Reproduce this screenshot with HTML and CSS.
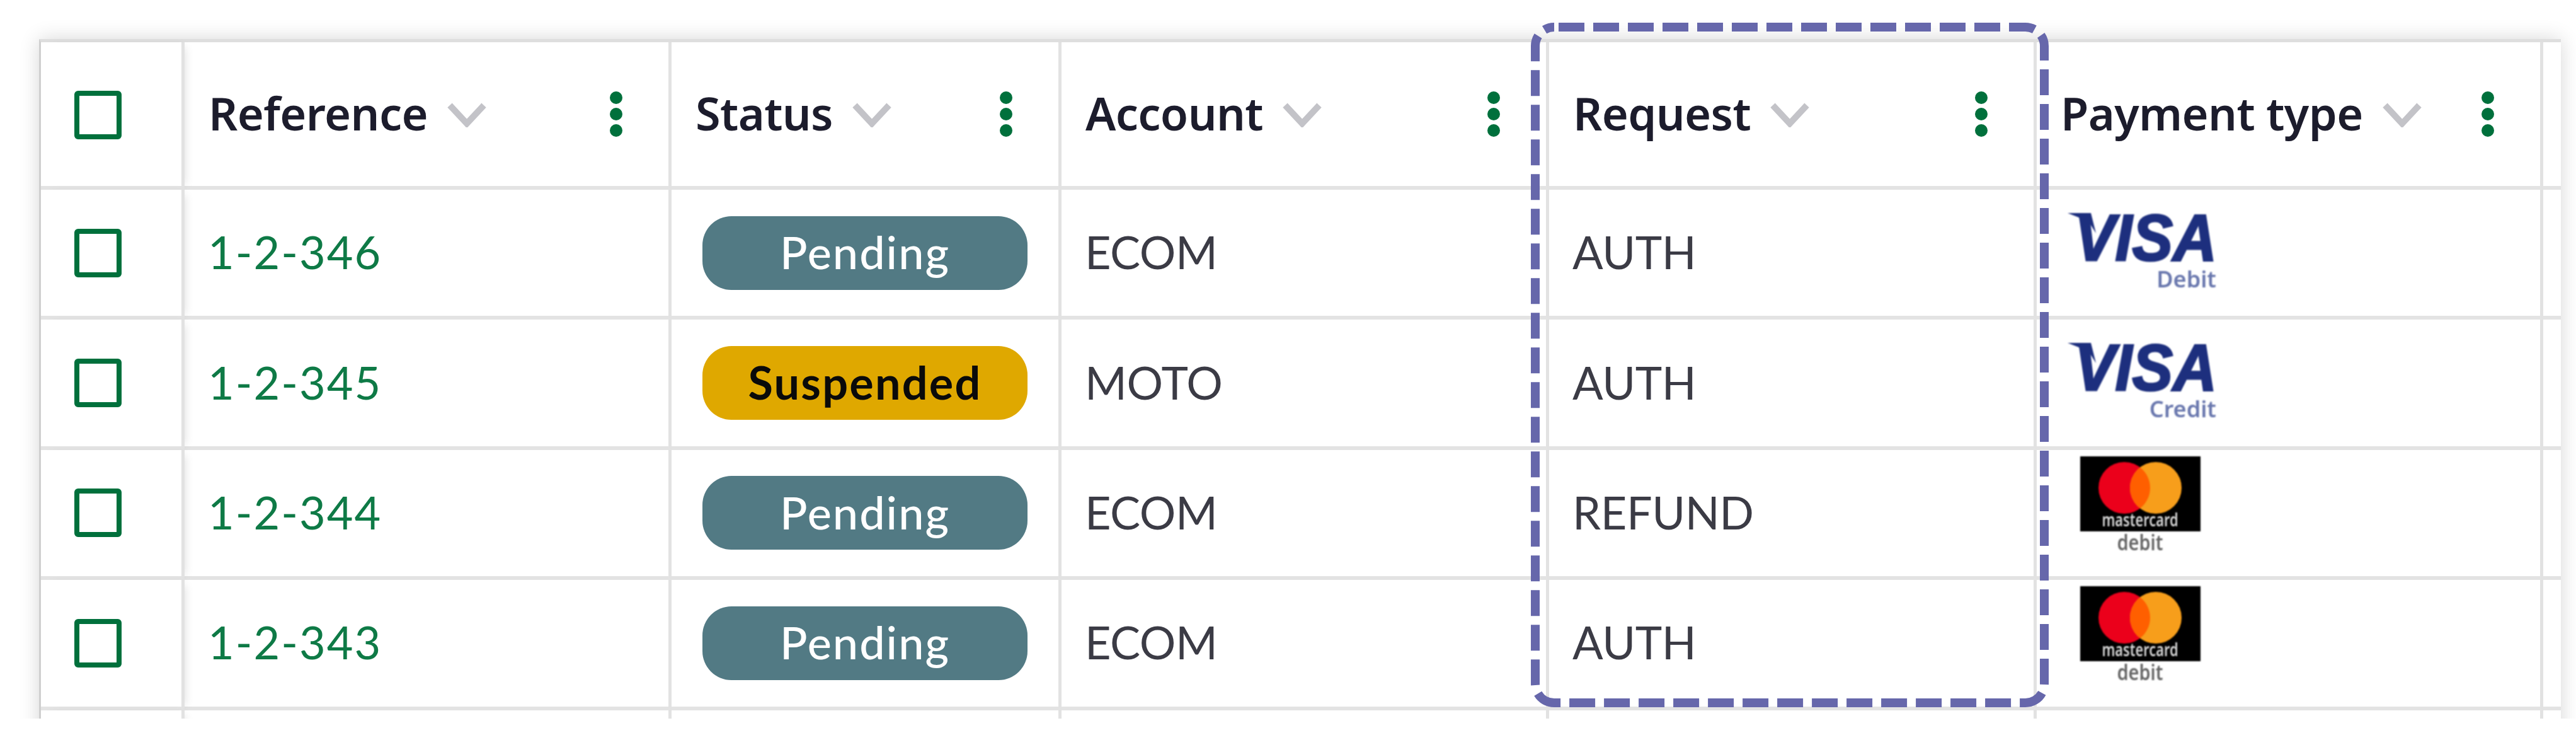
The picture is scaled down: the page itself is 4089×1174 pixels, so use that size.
FILE: index.html
```html
<!DOCTYPE html>
<html lang="en">
<head>
<meta charset="utf-8">
<title>Payments table</title>
<link rel="stylesheet" href="styles.css">
</head>
<body>
<main class="viewport">
  <div class="table">
    <div class="cell head check"><span class="box"></span></div>
    <div class="cell head"><span class="title">Reference<svg class="chev" viewBox="0 0 62 39"><path d="M4 4 31 33 58 4"/></svg></span><svg class="kebab" viewBox="0 0 20 72"><circle cx="10" cy="10" r="10"/><circle cx="10" cy="36" r="10"/><circle cx="10" cy="62" r="10"/></svg></div>
    <div class="cell head"><span class="title">Status<svg class="chev" viewBox="0 0 62 39"><path d="M4 4 31 33 58 4"/></svg></span><svg class="kebab" viewBox="0 0 20 72"><circle cx="10" cy="10" r="10"/><circle cx="10" cy="36" r="10"/><circle cx="10" cy="62" r="10"/></svg></div>
    <div class="cell head"><span class="title">Account<svg class="chev" viewBox="0 0 62 39"><path d="M4 4 31 33 58 4"/></svg></span><svg class="kebab" viewBox="0 0 20 72"><circle cx="10" cy="10" r="10"/><circle cx="10" cy="36" r="10"/><circle cx="10" cy="62" r="10"/></svg></div>
    <div class="cell head"><span class="title">Request<svg class="chev" viewBox="0 0 62 39"><path d="M4 4 31 33 58 4"/></svg></span><svg class="kebab" viewBox="0 0 20 72"><circle cx="10" cy="10" r="10"/><circle cx="10" cy="36" r="10"/><circle cx="10" cy="62" r="10"/></svg></div>
    <div class="cell head"><span class="title">Payment type<svg class="chev" viewBox="0 0 62 39"><path d="M4 4 31 33 58 4"/></svg></span><svg class="kebab" viewBox="0 0 20 72"><circle cx="10" cy="10" r="10"/><circle cx="10" cy="36" r="10"/><circle cx="10" cy="62" r="10"/></svg></div>
    <div class="cell end"></div>

    <div class="cell check"><span class="box"></span></div>
    <div class="cell text"><a class="ref">1-2-346</a></div>
    <div class="cell status"><span class="badge pending">Pending</span></div>
    <div class="cell text">ECOM</div>
    <div class="cell text">AUTH</div>
    <div class="cell logo"><svg viewBox="0 0 260 167"><polygon class="visa" points="9,30 46,30 54,62 42,43"/><text class="visa-word" x="20" y="105" textLength="226" lengthAdjust="spacingAndGlyphs">VISA</text><text class="visa-sub" x="245" y="148" text-anchor="end">Debit</text></svg></div>
    <div class="cell end"></div>

    <div class="cell check"><span class="box"></span></div>
    <div class="cell text"><a class="ref">1-2-345</a></div>
    <div class="cell status"><span class="badge suspended">Suspended</span></div>
    <div class="cell text">MOTO</div>
    <div class="cell text">AUTH</div>
    <div class="cell logo"><svg viewBox="0 0 260 167"><polygon class="visa" points="9,30 46,30 54,62 42,43"/><text class="visa-word" x="20" y="105" textLength="226" lengthAdjust="spacingAndGlyphs">VISA</text><text class="visa-sub" x="245" y="148" text-anchor="end">Credit</text></svg></div>
    <div class="cell end"></div>

    <div class="cell check"><span class="box"></span></div>
    <div class="cell text"><a class="ref">1-2-344</a></div>
    <div class="cell status"><span class="badge pending">Pending</span></div>
    <div class="cell text">ECOM</div>
    <div class="cell text">REFUND</div>
    <div class="cell logo"><svg viewBox="0 0 260 167"><rect class="mc-card" x="29" y="3" width="191" height="119"/><circle class="mc-red" cx="99" cy="53" r="41"/><circle class="mc-orange" cx="149" cy="53" r="41"/><path class="mc-lens" d="M124 20.5A41 41 0 0 1 124 85.5 41 41 0 0 1 124 20.5"/><text class="mc-word" x="124" y="114" text-anchor="middle" textLength="121" lengthAdjust="spacingAndGlyphs">mastercard</text><text class="mc-sub" x="124" y="152" text-anchor="middle" textLength="73" lengthAdjust="spacingAndGlyphs">debit</text></svg></div>
    <div class="cell end"></div>

    <div class="cell check"><span class="box"></span></div>
    <div class="cell text"><a class="ref">1-2-343</a></div>
    <div class="cell status"><span class="badge pending">Pending</span></div>
    <div class="cell text">ECOM</div>
    <div class="cell text">AUTH</div>
    <div class="cell logo"><svg viewBox="0 0 260 167"><rect class="mc-card" x="29" y="3" width="191" height="119"/><circle class="mc-red" cx="99" cy="53" r="41"/><circle class="mc-orange" cx="149" cy="53" r="41"/><path class="mc-lens" d="M124 20.5A41 41 0 0 1 124 85.5 41 41 0 0 1 124 20.5"/><text class="mc-word" x="124" y="114" text-anchor="middle" textLength="121" lengthAdjust="spacingAndGlyphs">mastercard</text><text class="mc-sub" x="124" y="152" text-anchor="middle" textLength="73" lengthAdjust="spacingAndGlyphs">debit</text></svg></div>
    <div class="cell end"></div>

    <div class="cell check"></div>
    <div class="cell"></div>
    <div class="cell"></div>
    <div class="cell"></div>
    <div class="cell"></div>
    <div class="cell"></div>
    <div class="cell end"></div>
  </div>
  <svg class="focus" viewBox="0 0 822 1086"><rect x="7" y="7" width="808" height="1072" rx="30" ry="30"/></svg>
</main>
</body>
</html>
```

FILE: styles.css
```css
html, body {
  margin: 0;
  background: #fff;
}

.viewport {
  position: relative;
  box-sizing: border-box;
  height: 1140px;
  padding: 62px 0 0 62px;
  overflow: hidden;
  font-family: "Lato", "Noto Sans", sans-serif;
  font-size: 72px;
  color: #3b3b45;
}

.table {
  display: grid;
  grid-template-columns: 228px 773px 619px 774px 774px 804px 28px;
  grid-template-rows: 234px repeat(5, 206.4px);
  width: max-content;
  border-top: 5px solid #dedede;
  border-left: 3px solid #cfcfcf;
  box-shadow: 0 0 30px rgba(0, 0, 0, 0.16);
  background: #fff;
}

.cell {
  box-sizing: border-box;
  display: flex;
  align-items: center;
  padding: 0 40px;
  border-right: 5px solid #e2e2e2;
  border-bottom: 6px solid #e3e3e3;
  background: #fff;
}

.end {
  border-right: 0;
  padding: 0;
}

.text {
  padding: 0 37px 4px;
  letter-spacing: -0.4px;
}

.head {
  justify-content: space-between;
  padding: 0 73px 0 38px;
  font-family: "Noto Sans", sans-serif;
  font-weight: 600;
  letter-spacing: -0.6px;
  color: #1c1c2c;
}

.title {
  display: flex;
  align-items: center;
  gap: 31px;
  padding-bottom: 4px;
}

.chev {
  width: 62px;
  height: 39px;
  margin-top: 6px;
}

.chev path {
  fill: none;
  stroke: #c3c3c8;
  stroke-width: 10;
}

.kebab {
  width: 20px;
  height: 72px;
  fill: #00703c;
}

.check {
  position: relative;
  z-index: 1;
  padding: 0 0 0 53px;
  box-shadow: 8px 0 14px -8px rgba(0, 0, 0, 0.14);
}

.head .box {
  margin-top: 3px;
}

.box {
  box-sizing: border-box;
  width: 75px;
  height: 77px;
  border: 8px solid #00703c;
  border-radius: 6px;
}

.ref {
  color: #0e7a46;
  letter-spacing: 2px;
}

.status {
  padding-left: 49px;
}

.badge {
  display: flex;
  align-items: center;
  justify-content: center;
  width: 516px;
  height: 117px;
  padding-bottom: 4px;
  box-sizing: border-box;
  border-radius: 46px;
}

.pending {
  background: #527a84;
  color: #fff;
  font-weight: 500;
  letter-spacing: 2px;
}

.suspended {
  background: #dfa800;
  color: #0a0a0a;
  font-weight: 700;
  letter-spacing: 2.2px;
}

.logo {
  align-items: flex-start;
  padding-top: 7px;
}

.logo svg {
  width: 260px;
  height: 167px;
  overflow: visible;
  filter: blur(1.3px);
}

.visa {
  fill: #1d2f7e;
}

.visa-word {
  fill: #1d2f7e;
  stroke: #1d2f7e;
  stroke-width: 3px;
  font-family: "Liberation Sans", sans-serif;
  font-size: 104px;
  font-style: italic;
  font-weight: 700;
}

.visa-sub {
  fill: #6a78ae;
  font-family: "Noto Sans", sans-serif;
  font-size: 36px;
  font-weight: 600;
}

.mc-card {
  fill: #000;
}

.mc-red {
  fill: #eb001b;
}

.mc-orange {
  fill: #f79e1b;
}

.mc-lens {
  fill: #ff5f00;
}

.mc-word {
  fill: #d8d8d8;
  font-family: "Noto Sans", sans-serif;
  font-size: 28px;
  font-weight: 600;
}

.mc-sub {
  fill: #666;
  font-family: "Noto Sans", sans-serif;
  font-size: 34px;
  font-weight: 600;
}

.focus {
  position: absolute;
  left: 2430px;
  top: 36px;
  width: 822px;
  height: 1086px;
  z-index: 2;
}

.focus rect {
  fill: none;
  stroke: #6667ab;
  stroke-width: 14;
  stroke-dasharray: 41 14;
  stroke-dashoffset: -7;
}
```
